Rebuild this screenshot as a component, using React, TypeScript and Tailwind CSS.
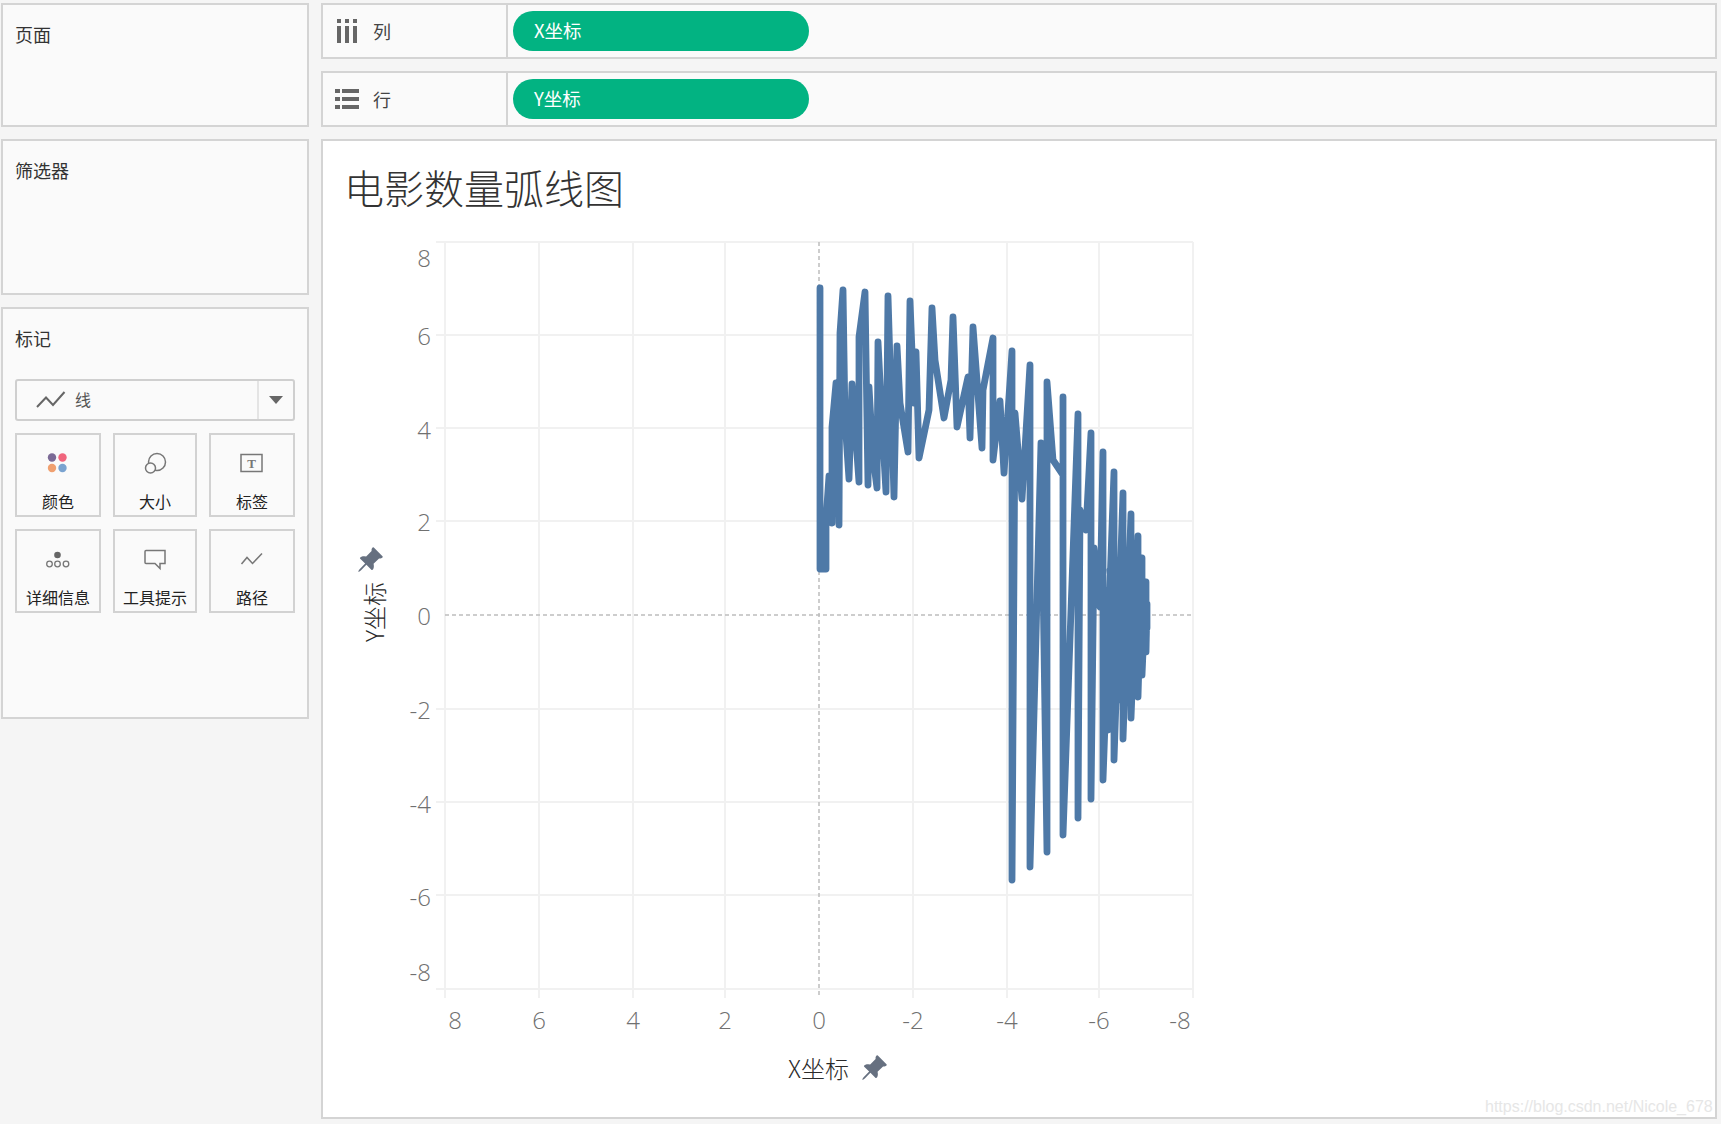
import type { ReactNode } from 'react';
import { BsPinAngleFill } from 'react-icons/bs';

const cjk = "font-['Noto_Sans_CJK_SC','Noto_Sans',sans-serif]";
const panel = 'border-2 border-[#d4d4d4] bg-[#fafafa]';

const gridX = [445, 539, 633, 725, 913, 1007, 1099, 1193];
const gridY = [242, 335, 428, 521, 709, 802, 895, 989];

const yLabels: [string, number][] = [
  ['8', 257], ['6', 335], ['4', 429], ['2', 521], ['0', 615],
  ['-2', 709], ['-4', 803], ['-6', 896], ['-8', 971],
];
const xLabels: [string, number][] = [
  ['8', 455], ['6', 539], ['4', 633], ['2', 725], ['0', 819],
  ['-2', 913], ['-4', 1007], ['-6', 1099], ['-8', 1180],
];

// traced from the picture, page pixels
const line = `820,288 820,569 826,569 826,520 829,476 832,523 832,427 836,383 839,525 840,333 843,290
845,420 849,479 852,384 859,482 859,337 865,292 868,485 869,387 873,457 877,488 878,342 883,441 886,492
888,296 894,497 897,346 900,403 908,452 910,301 914,403 916,352 919,458 929,410 932,308 935,360 944,418
951,380 953,317 957,427 968,377 970,438 973,327 982,448 983,390 993,338 993,460 1000,401 1004,473
1012,351 1012,880 1015,413 1022,499 1030,365 1030,867 1041,443 1047,852 1047,382 1053,460 1063,475
1063,397 1063,835 1078,414 1078,818 1080,510 1086,530 1091,433 1091,799 1094,548 1100,607 1103,452
1103,780 1114,472 1114,760 1123,493 1123,739 1131,514 1131,718 1138,536 1138,697 1142,558 1142,675
1146,582 1146,652 1147,604 1147,628 1106,606 1145,640 1106,625 1143,600 1108,650 1140,590 1108,600
1135,660 1108,590 1128,680 1108,620 1118,700 1106,660 1108,730 1106,640 1118,590 1130,650 1122,580
1140,640 1128,590 1138,625 1118,640 1135,585 1112,670 1142,612 1110,690 1126,570 1120,690 1134,560
1128,660 1110,570 1116,640 1140,655 1118,600 1144,622`;

function Shelf({ label, pill, icon }: { label: string; pill: string; icon: ReactNode }) {
  return (
    <div className={`${panel} flex h-14 items-center`}>
      <div className="flex h-full w-[185px] shrink-0 items-center border-r-2 border-[#d4d4d4] pl-[14px]">
        <div className="w-[36px]">{icon}</div>
        <span className={`${cjk} text-[18px] text-[#444]`}>{label}</span>
      </div>
      <div className={`${cjk} ml-[5px] flex h-10 w-[296px] items-center rounded-full bg-[#02b382] pl-[21px] text-[18.500px] text-white`}>
        {pill}
      </div>
    </div>
  );
}

function MarkCard({ label, width, children }: { label: string; width: string; children: ReactNode }) {
  return (
    <div className={`${width} h-[84px] border-2 border-[#d2d2d2] pt-[14px]`}>
      <svg width="28" height="28" viewBox="0 0 28 28" fill="none" className="mx-auto block">
        {children}
      </svg>
      <div className={`${cjk} mt-[14px] text-center text-[16px] leading-5 text-[#222]`}>{label}</div>
    </div>
  );
}

export default function App() {
  return (
    <div className="relative flex h-[1124px] w-[1721px] gap-3 overflow-hidden bg-[#f5f5f5] pl-px pt-[3px]">
      <div className="flex w-[308px] shrink-0 flex-col gap-3">
        <div className={`${panel} h-[124px] pl-3 pt-[17px]`}>
          <p className={`${cjk} text-[18px] leading-6 text-[#333]`}>页面</p>
        </div>
        <div className={`${panel} h-[156px] pl-3 pt-[17px]`}>
          <p className={`${cjk} text-[18px] leading-6 text-[#333]`}>筛选器</p>
        </div>
        <div className={`${panel} h-[412px] px-3 pt-[17px]`}>
          <p className={`${cjk} text-[18px] leading-6 text-[#333]`}>标记</p>
          <div className="mt-[29px] flex h-[42px] w-[280px] items-center rounded-[3px] border-2 border-[#cfcfcf]">
            <svg width="30" height="18" viewBox="0 0 30 18" fill="none" className="ml-[19px]">
              <path d="M1 16L10 6.500L17 14L28.500 1" stroke="#666" strokeWidth="2" />
            </svg>
            <span className={`${cjk} mb-0.5 ml-[9px] text-[16px] text-[#555]`}>线</span>
            <div className="ml-auto flex h-full w-9 items-center justify-center border-l-2 border-[#e4e4e4]">
              <svg width="14" height="8" viewBox="0 0 14 8">
                <path d="M0 0H14L7 8Z" fill="#666" />
              </svg>
            </div>
          </div>
          <div className="mt-3 flex w-[280px] justify-between">
            <MarkCard label="颜色" width="w-[86px]">
              <circle cx="8" cy="8.500" r="4.200" fill="#7b6a96" />
              <circle cx="18.500" cy="8.500" r="4.200" fill="#f0657d" />
              <circle cx="8" cy="19" r="4.200" fill="#f0a070" />
              <circle cx="18.500" cy="19" r="4.200" fill="#7aa3d0" />
            </MarkCard>
            <MarkCard label="大小" width="w-[84px]">
              <circle cx="16" cy="13" r="8.500" stroke="#777" strokeWidth="1.500" />
              <circle cx="9.500" cy="19" r="5" stroke="#777" strokeWidth="1.500" fill="#fafafa" />
            </MarkCard>
            <MarkCard label="标签" width="w-[86px]">
              <rect x="3" y="5.500" width="21" height="17" stroke="#777" strokeWidth="1.500" />
              <text x="13.500" y="19" textAnchor="middle" fontSize="13" fontWeight="700" fill="#777" fontFamily="Liberation Serif, serif">T</text>
            </MarkCard>
          </div>
          <div className="mt-3 flex w-[280px] justify-between">
            <MarkCard label="详细信息" width="w-[86px]">
              <circle cx="13.500" cy="10" r="3.300" fill="#666" />
              <circle cx="5.500" cy="19" r="2.800" stroke="#777" strokeWidth="1.300" />
              <circle cx="13.500" cy="19" r="2.800" stroke="#777" strokeWidth="1.300" />
              <circle cx="22" cy="19" r="2.800" stroke="#777" strokeWidth="1.300" />
            </MarkCard>
            <MarkCard label="工具提示" width="w-[84px]">
              <path d="M5 5.500H24V18.500H19V23.500L14 18.500H5A1 1 0 0 1 4 17.500V6.500A1 1 0 0 1 5 5.500Z" stroke="#777" strokeWidth="1.500" />
            </MarkCard>
            <MarkCard label="路径" width="w-[86px]">
              <path d="M3.500 19L9 12.500L14.500 18.500L24 8.500" stroke="#777" strokeWidth="1.500" />
            </MarkCard>
          </div>
        </div>
      </div>

      <div className="flex w-[1396px] shrink-0 flex-col gap-3">
        <Shelf
          label="列"
          pill="X坐标"
          icon={
            <svg width="20" height="24" viewBox="0 0 20 24" fill="#666">
              <path d="M0 0H4V4H0ZM8 0H12V4H8ZM16 0H20V4H16ZM0 7H4V24H0ZM8 7H12V24H8ZM16 7H20V24H16Z" />
            </svg>
          }
        />
        <Shelf
          label="行"
          pill="Y坐标"
          icon={
            <svg width="24" height="20" viewBox="0 0 24 20" fill="#666" className="-ml-0.5">
              <path d="M0 0H5V4H0ZM7 0H24V4H7ZM0 8H5V12H0ZM7 8H24V12H7ZM0 16H5V20H0ZM7 16H24V20H7Z" />
            </svg>
          }
        />
        <div className="h-[980px] border-2 border-[#d4d4d4] bg-white">
          <h1 className={`${cjk} h-[84px] pl-[21px] pt-[17px] text-[40px] font-light leading-[58px] text-[#333]`}>
            电影数量弧线图
          </h1>
          <svg width="1000" height="890" viewBox="323 225 1000 890" fill="none" className="block">
            {gridX.map((x) => (
              <line key={x} x1={x} y1={242} x2={x} y2={998} stroke="#f1f1f1" strokeWidth="2" />
            ))}
            {gridY.map((y) => (
              <line key={y} x1={436} y1={y} x2={1193} y2={y} stroke="#f1f1f1" strokeWidth="2" />
            ))}
            <line x1={819} y1={242} x2={819} y2={998} stroke="#bdbdbd" strokeWidth="1.500" strokeDasharray="4 3" />
            <line x1={445} y1={615} x2={1193} y2={615} stroke="#bdbdbd" strokeWidth="1.500" strokeDasharray="4 3" />

            {yLabels.map(([t, y]) => (
              <text key={t} x={431} y={y} textAnchor="end" dominantBaseline="central" fontSize="24" fontWeight="300" fill="#707070" fontFamily="Open Sans, sans-serif">
                {t}
              </text>
            ))}
            {xLabels.map(([t, x]) => (
              <text key={t} x={x} y={1019} textAnchor="middle" dominantBaseline="central" fontSize="24" fontWeight="300" fill="#707070" fontFamily="Open Sans, sans-serif">
                {t}
              </text>
            ))}

            <polyline points={line} stroke="#4e79a7" strokeWidth="6.800" strokeLinecap="round" strokeLinejoin="round" />

            <text x={788} y={1067} dominantBaseline="central" fontSize="24" fill="#2a2a2a" fontFamily="Noto Sans CJK SC, sans-serif" fontWeight="300">
              X坐标
            </text>
            <g transform="translate(860 1054)">
              <BsPinAngleFill size={28} color="#667080" />
            </g>
            <text x={373} y={612} transform="rotate(-90 373 612)" textAnchor="middle" dominantBaseline="central" fontSize="24" fill="#2a2a2a" fontFamily="Noto Sans CJK SC, sans-serif" fontWeight="300">
              Y坐标
            </text>
            <g transform="translate(356 546)">
              <BsPinAngleFill size={28} color="#667080" />
            </g>
          </svg>
        </div>
      </div>

      <div className="absolute left-[1485px] top-[1095px] font-['Liberation_Sans',sans-serif] text-[16px] text-[#e6e6e6]">
        https://blog.csdn.net/Nicole_678
      </div>
    </div>
  );
}
